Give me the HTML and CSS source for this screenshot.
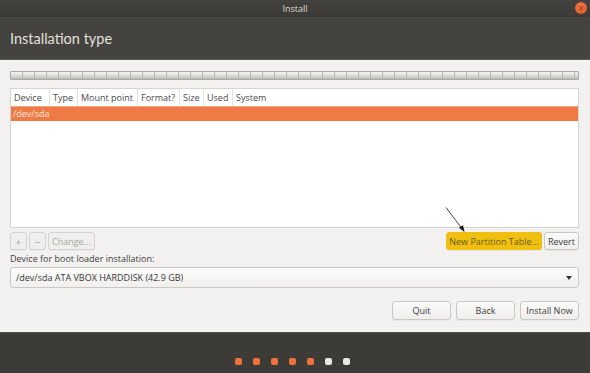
FILE: index.html
```html
<!DOCTYPE html>
<html lang="en">
<head>
    <meta charset="UTF-8">
    <title>Install</title>
    <link rel="stylesheet" href="styles.css">
</head>
<body>
<div class="window">
    <div class="titlebar">
        <span class="title">Install</span>
        <span class="close">&times;</span>
    </div>
    <div class="header">
        <h1>Installation type</h1>
    </div>
    <div class="content">
        <div class="diskbar"></div>
        <div class="table">
            <div class="table-head">
                <span class="col c-device">Device</span>
                <span class="col c-type">Type</span>
                <span class="col c-mount">Mount point</span>
                <span class="col c-format">Format?</span>
                <span class="col c-size">Size</span>
                <span class="col c-used">Used</span>
                <span class="col c-system">System</span>
            </div>
            <div class="row selected">/dev/sda</div>
        </div>
        <div class="toolbar">
            <button class="btn small" disabled>+</button>
            <button class="btn small" disabled>&minus;</button>
            <button class="btn" disabled>Change...</button>
            <div class="spacer"></div>
            <div class="pointer">
                <svg width="22" height="26" viewBox="0 0 22 26">
                    <line x1="1" y1="0.5" x2="17" y2="21.5" stroke="#111" stroke-width="0.8"/>
                    <path d="M19.5 25 L14 20.8 L18 18.2 Z" fill="#111"/>
                </svg>
            </div>
            <button class="btn highlight">New Partition Table...</button>
            <button class="btn">Revert</button>
        </div>
        <div class="label">Device for boot loader installation:</div>
        <div class="combo">
            <span>/dev/sda ATA VBOX HARDDISK (42.9 GB)</span>
            <span class="caret"></span>
        </div>
        <div class="actions">
            <button class="btn wide">Quit</button>
            <button class="btn wide">Back</button>
            <button class="btn wide">Install Now</button>
        </div>
    </div>
    <div class="footer">
        <span class="dot done"></span>
        <span class="dot done"></span>
        <span class="dot done"></span>
        <span class="dot done"></span>
        <span class="dot done"></span>
        <span class="dot"></span>
        <span class="dot"></span>
    </div>
</div>
</body>
</html>
```

FILE: styles.css
```css
* {
    box-sizing: border-box;
}

body {
    margin: 0;
    padding: 0;
    font-family: "Open Sans", "DejaVu Sans", sans-serif;
    background-color: #3c3b37;
}

.window {
    width: 590px;
    height: 373px;
    display: flex;
    flex-direction: column;
    overflow: hidden;
}

.titlebar {
    height: 17px;
    flex: none;
    background: linear-gradient(#43423e, #3b3a36);
    position: relative;
    display: flex;
    align-items: center;
    justify-content: center;
}

.title {
    color: #dcdad5;
    font-size: 9px;
}

.close {
    position: absolute;
    right: 3px;
    top: 2px;
    width: 12px;
    height: 12px;
    border-radius: 50%;
    background: radial-gradient(circle at 50% 40%, #f47a4a, #dd5423);
    color: #8a3415;
    font-size: 10px;
    line-height: 12px;
    text-align: center;
}

.header {
    height: 43px;
    flex: none;
    background-color: #45433f;
    display: flex;
    align-items: center;
    padding: 0 0 0 10px;
    border-bottom: 1px solid #5c5a55;
}

.header h1 {
    margin: 0;
    font-family: Lato, "Open Sans", sans-serif;
    font-size: 14.5px;
    font-weight: normal;
    color: #e2e0dc;
}

.content {
    flex: none;
    height: 272px;
    background-color: #f2f1f0;
    padding: 0 11px 0 10px;
    display: flex;
    flex-direction: column;
    font-size: 9px;
    color: #3c3c3c;
    white-space: nowrap;
}

.diskbar {
    flex: none;
    margin-top: 11px;
    height: 9px;
    border: 1px solid #a9a9a6;
    border-radius: 1px;
    background:
        repeating-linear-gradient(90deg, transparent 0 11px, #b8b8b5 11px 12px),
        linear-gradient(#f4f4f3, #d8d8d6 60%, #b9b9b6);
}

.table {
    flex: none;
    margin-top: 8px;
    height: 140px;
    background-color: #ffffff;
    border: 1px solid #d6d5d2;
}

.table-head {
    display: flex;
    height: 17px;
    color: #4a4a4a;
}

.col {
    flex: none;
    height: 17px;
    line-height: 17px;
    padding: 0 3px;
    border-right: 1px solid #e2e1de;
}

.c-device { width: 39px; }
.c-type { width: 28px; }
.c-mount { width: 60px; }
.c-format { width: 42px; }
.c-size { width: 24px; }
.c-used { width: 29px; }
.c-system { border-right: none; }

.row {
    height: 15px;
    line-height: 14px;
    padding-left: 2px;
}

.row.selected {
    background-color: #ef7a45;
    color: #fbe9df;
    border-top: 1px solid #f3a57f;
}

.toolbar {
    flex: none;
    margin-top: 4px;
    display: flex;
    align-items: center;
    gap: 2px;
    height: 18px;
}

.spacer {
    flex: 1;
}

.pointer {
    position: relative;
    align-self: stretch;
    width: 0;
}

.pointer svg {
    position: absolute;
    left: 1px;
    bottom: 17px;
}

.btn {
    flex: none;
    font-family: inherit;
    font-size: 9px;
    color: #3c3c3c;
    height: 18px;
    padding: 0 3px;
    white-space: nowrap;
    background: linear-gradient(#fbfbfa, #efeeec);
    border: 1px solid #c9c8c4;
    border-radius: 3px;
    box-shadow: 0 1px 0 rgba(0, 0, 0, 0.04);
}

.btn[disabled] {
    color: #a8a7a3;
    background: #f0efed;
    border-color: #d4d3cf;
}

.btn.small {
    width: 17px;
    font-size: 11px;
    padding: 0;
}

.btn.highlight {
    background: #f0c010;
    border-color: #f0c010;
    color: #6d5a15;
    width: 96px;
    padding: 0;
}

.btn.wide {
    width: 59px;
    height: 19px;
}

.label {
    flex: none;
    margin-top: 3px;
    line-height: 12px;
    color: #404040;
}

.combo {
    flex: none;
    margin-top: 2px;
    height: 21px;
    border: 1px solid #c9c8c4;
    border-radius: 3px;
    background: linear-gradient(#fcfcfb, #f1f0ee);
    display: flex;
    align-items: center;
    justify-content: space-between;
    padding: 0 6px 0 5px;
    color: #383838;
}

.caret {
    width: 0;
    height: 0;
    border-left: 3px solid transparent;
    border-right: 3px solid transparent;
    border-top: 4px solid #333;
}

.actions {
    flex: none;
    margin-top: 13px;
    display: flex;
    justify-content: flex-end;
    gap: 5px;
}

.footer {
    flex: 1;
    background-color: #3c3b37;
    border-top: 1px solid #54524d;
    display: flex;
    justify-content: center;
    align-items: center;
    gap: 11px;
    padding-top: 16px;
    padding-right: 5px;
}

.dot {
    width: 7px;
    height: 7px;
    border-radius: 2px;
    background-color: #e8e8e6;
}

.dot.done {
    background-color: #f0703e;
}
```
